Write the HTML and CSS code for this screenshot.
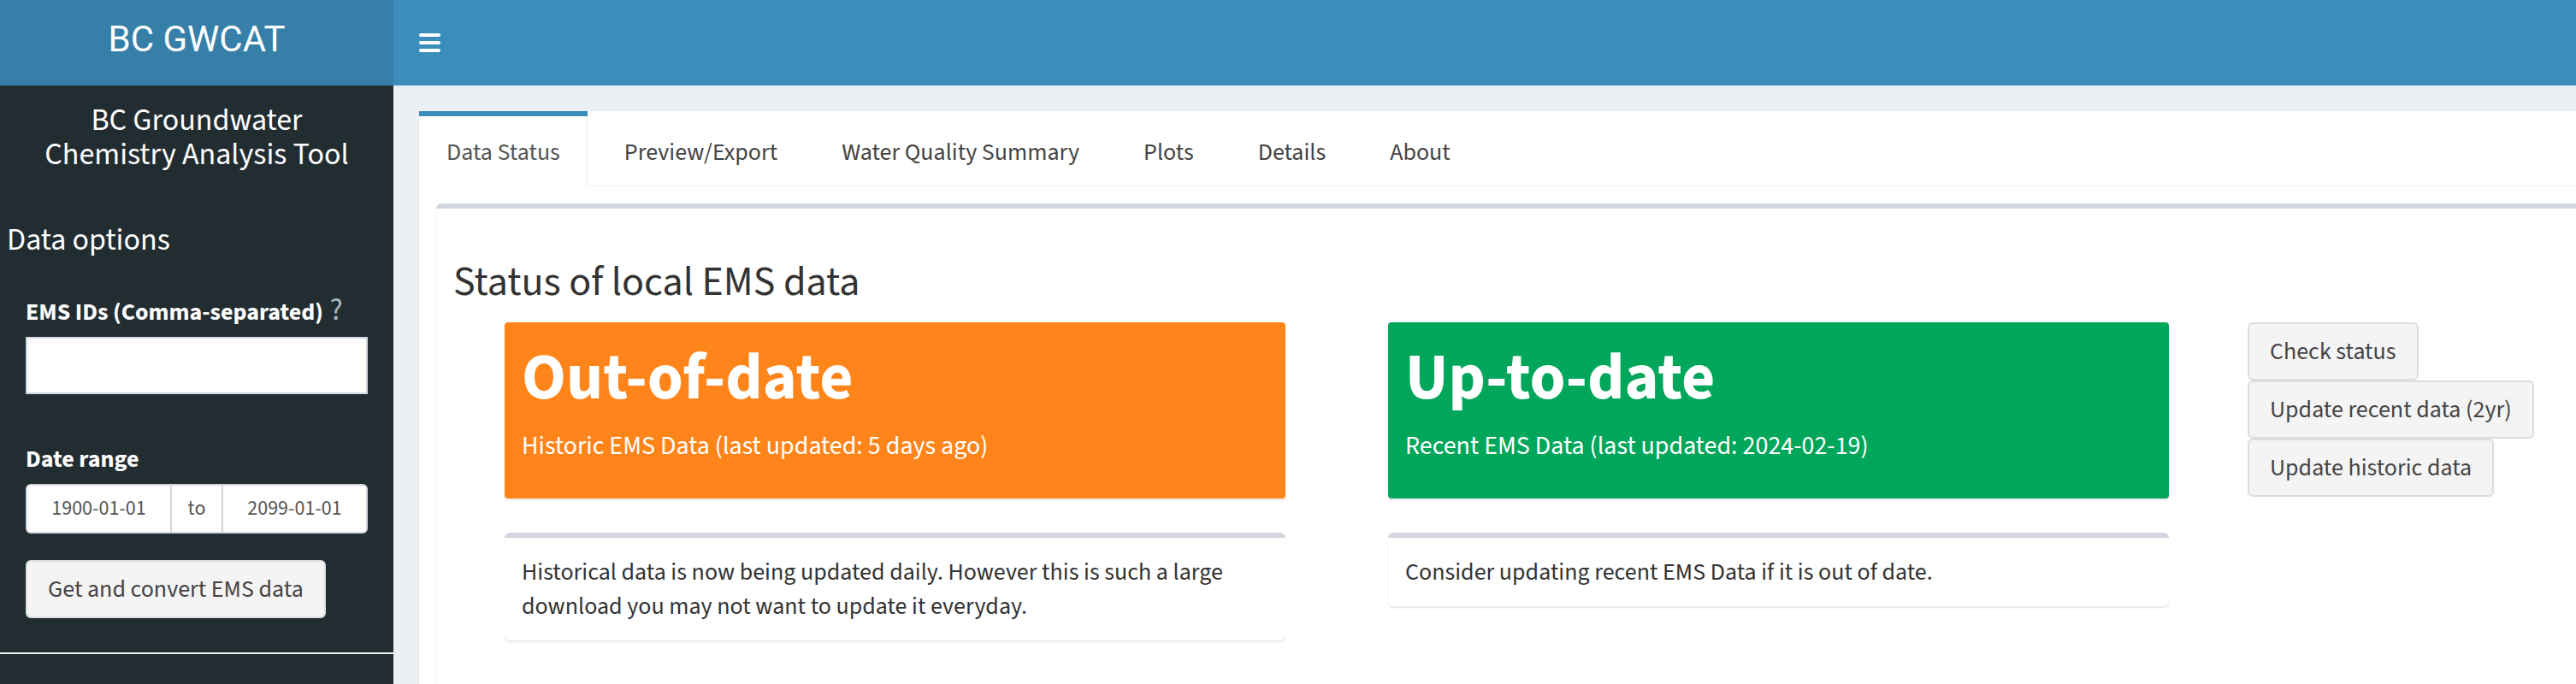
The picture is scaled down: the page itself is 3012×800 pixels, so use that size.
FILE: index.html
```html
<!DOCTYPE html>
<html lang="en">
<head>
<meta charset="utf-8">
<title>BC GWCAT</title>
<link rel="stylesheet" href="styles.css">
</head>
<body>
<div class="app">
  <header class="main-header">
    <div class="logo">BC GWCAT</div>
    <nav class="navbar">
      <span class="sidebar-toggle" aria-label="Toggle navigation">
        <svg width="25" height="22" viewBox="0 0 25 22"><rect x="0" y="0" width="25" height="4" rx="2" fill="#fff"/><rect x="0" y="9" width="25" height="4" rx="2" fill="#fff"/><rect x="0" y="18" width="25" height="4" rx="2" fill="#fff"/></svg>
      </span>
    </nav>
  </header>
  <div class="wrapper">
    <aside class="sidebar">
      <div class="app-title"><div class="title-line">BC Groundwater</div><div class="title-line">Chemistry Analysis Tool</div></div>
      <h4 class="section-title">Data options</h4>
      <div class="form-group ems">
        <label class="control-label">EMS IDs (Comma-separated) <span class="help">?</span></label>
        <input class="text-input" type="text">
      </div>
      <div class="form-group daterange-group">
        <label class="control-label">Date range</label>
        <div class="daterange">
          <input class="date-input" type="text" value="1900-01-01">
          <span class="addon">to</span>
          <input class="date-input" type="text" value="2099-01-01">
        </div>
      </div>
      <div class="form-group">
        <button class="btn">Get and convert EMS data</button>
      </div>
      <hr class="sidebar-rule">
    </aside>
    <main class="content">
      <div class="tabs-box">
        <ul class="tabs">
          <li class="tab active"><a>Data Status</a></li>
          <li class="tab"><a>Preview/Export</a></li>
          <li class="tab"><a>Water Quality Summary</a></li>
          <li class="tab"><a>Plots</a></li>
          <li class="tab"><a>Details</a></li>
          <li class="tab"><a>About</a></li>
        </ul>
        <div class="tab-content">
          <div class="box">
            <div class="box-body">
              <h3 class="box-heading">Status of local EMS data</h3>
              <div class="status-row">
                <div class="status-col">
                  <div class="small-box orange">
                    <h3>Out-of-date</h3>
                    <p>Historic EMS Data (last updated: 5 days ago)</p>
                  </div>
                  <div class="note-box">Historical data is now being updated daily. However this is such a large download you may not want to update it everyday.</div>
                </div>
                <div class="status-col">
                  <div class="small-box green">
                    <h3>Up-to-date</h3>
                    <p>Recent EMS Data (last updated: 2024-02-19)</p>
                  </div>
                  <div class="note-box">Consider updating recent EMS Data if it is out of date.</div>
                </div>
                <div class="btn-col">
                  <button class="btn">Check status</button>
                  <button class="btn">Update recent data (2yr)</button>
                  <button class="btn">Update historic data</button>
                </div>
              </div>
            </div>
          </div>
        </div>
      </div>
    </main>
  </div>
</div>
</body>
</html>
```
FILE: styles.css
```css
* { box-sizing: border-box; }
html, body { margin: 0; padding: 0; }
body {
  font-family: "Source Sans 3", "Source Sans Pro", Lato, sans-serif;
  font-size: 28px;
  line-height: 40px;
  color: #333;
  background: #ecf0f5;
}
.app { width: 3012px; height: 800px; overflow: hidden; }

/* header */
.main-header { display: flex; height: 100px; }
.logo {
  width: 460px;
  flex: none;
  background: #367fa9;
  color: #fff;
  font-family: Roboto, "Liberation Sans", sans-serif;
  font-size: 42px;
  line-height: 92px;
  text-align: center;
}
.navbar { flex: 1; background: #3c8dbc; padding-left: 30px; }
.sidebar-toggle { display: block; width: 25px; height: 22px; margin-top: 39px; }
.sidebar-toggle svg { display: block; }

.wrapper { display: flex; height: 700px; }

/* sidebar */
.sidebar { width: 460px; flex: none; background: #222d32; color: #fff; }
.app-title {
  margin-top: 21px;
  text-align: center;
  font-size: 36px;
}
.title-line { height: 39.6px; line-height: 39.6px; }
.section-title {
  margin: 61px 0 0;
  padding-left: 8px;
  font-size: 36px;
  line-height: 39.6px;
  font-weight: 400;
}
.form-group { padding: 0 30px; }
.control-label { display: block; font-weight: 700; margin-bottom: 9px; }
.ems { margin-top: 44px; }
.help { font-size: 36px; line-height: 30px; font-weight: 400; color: #aab9c1; margin-left: 2px; }
.text-input {
  display: block;
  width: 100%;
  height: 67px;
  margin: 0;
  border: 2px solid #d2d6de;
  background: #fff;
  font: inherit;
  outline: none;
}
.daterange-group { margin-top: 56px; }
.daterange-group .control-label { margin-bottom: 9px; }
.daterange {
  display: flex;
  height: 58px;
  border: 2px solid #d2d6de;
  border-radius: 6px;
  background: #fff;
  overflow: hidden;
}
.date-input {
  flex: 1;
  min-width: 0;
  margin: 0;
  padding: 0;
  border: 0;
  background: #fff;
  font-family: inherit;
  font-size: 24px;
  color: #555;
  text-align: center;
  outline: none;
}
.addon {
  width: 62px;
  flex: none;
  border-left: 2px solid #d2d6de;
  border-right: 2px solid #d2d6de;
  font-size: 24px;
  line-height: 54px;
  color: #555;
  text-align: center;
}
.sidebar .btn { margin-top: 31px; }
.sidebar-rule { margin: 40px 0 0; border: 0; border-top: 2px solid #eee; height: 0; }

.btn {
  display: inline-block;
  margin: 0;
  padding: 12px 24px;
  font-family: inherit;
  font-size: 28px;
  line-height: 40px;
  color: #444;
  background: #f4f4f4;
  border: 2px solid #ddd;
  border-radius: 6px;
  white-space: nowrap;
}

/* content */
.content { flex: 1; min-width: 0; padding: 30px 0 0 30px; }
.tabs-box {
  width: calc(100% + 60px);
  height: 700px;
  background: #fff;
  border-radius: 6px;
  box-shadow: 0 2px 2px rgba(0,0,0,0.1);
}
.tabs {
  display: flex;
  margin: 0;
  padding: 0;
  list-style: none;
  border-bottom: 2px solid #f4f4f4;
}
.tab { border-top: 6px solid transparent; margin-bottom: -2px; margin-right: 11px; }
.tab a {
  display: block;
  padding: 20px 30px;
  border: 2px solid transparent;
  border-bottom: 0;
  color: #444;
  line-height: 40px;
}
.tab.active { border-top-color: #3c8dbc; }
.tab.active a { background: #fff; color: #555; border-left-color: transparent; border-right-color: #f4f4f4; }

.tab-content { padding: 20px; }
.box {
  border-top: 6px solid #d2d6de;
  border-radius: 6px;
  background: #fff;
  box-shadow: 0 2px 2px rgba(0,0,0,0.1);
  min-height: 700px;
}
.box-body { padding: 20px; }
.box-heading {
  margin: 40px 0 20px;
  font-size: 48px;
  line-height: 52.8px;
  font-weight: 400;
  color: #333;
}
.status-row { display: flex; align-items: flex-start; padding-left: 60px; }
.status-col { width: 913px; flex: none; margin-right: 120px; }
.status-col + .status-col { margin-right: 92px; }
.small-box {
  height: 206px;
  padding: 20px;
  border-radius: 4px;
  color: #fff;
  box-shadow: 0 2px 2px rgba(0,0,0,0.1);
}
.small-box.orange { background: #ff851b; }
.small-box.green { background: #00a65a; }
.small-box h3 {
  margin: 4px 0 17px;
  font-size: 76px;
  line-height: 83.6px;
  font-weight: 700;
  white-space: nowrap;
}
.small-box p { margin: 0; font-size: 30px; line-height: 42.8px; }
.note-box {
  margin-top: 40px;
  padding: 20px;
  border-top: 6px solid #d2d6de;
  border-radius: 6px;
  background: #fff;
  box-shadow: 0 2px 2px rgba(0,0,0,0.1);
}
.btn-col { display: flex; flex-direction: column; align-items: flex-start; }
```
